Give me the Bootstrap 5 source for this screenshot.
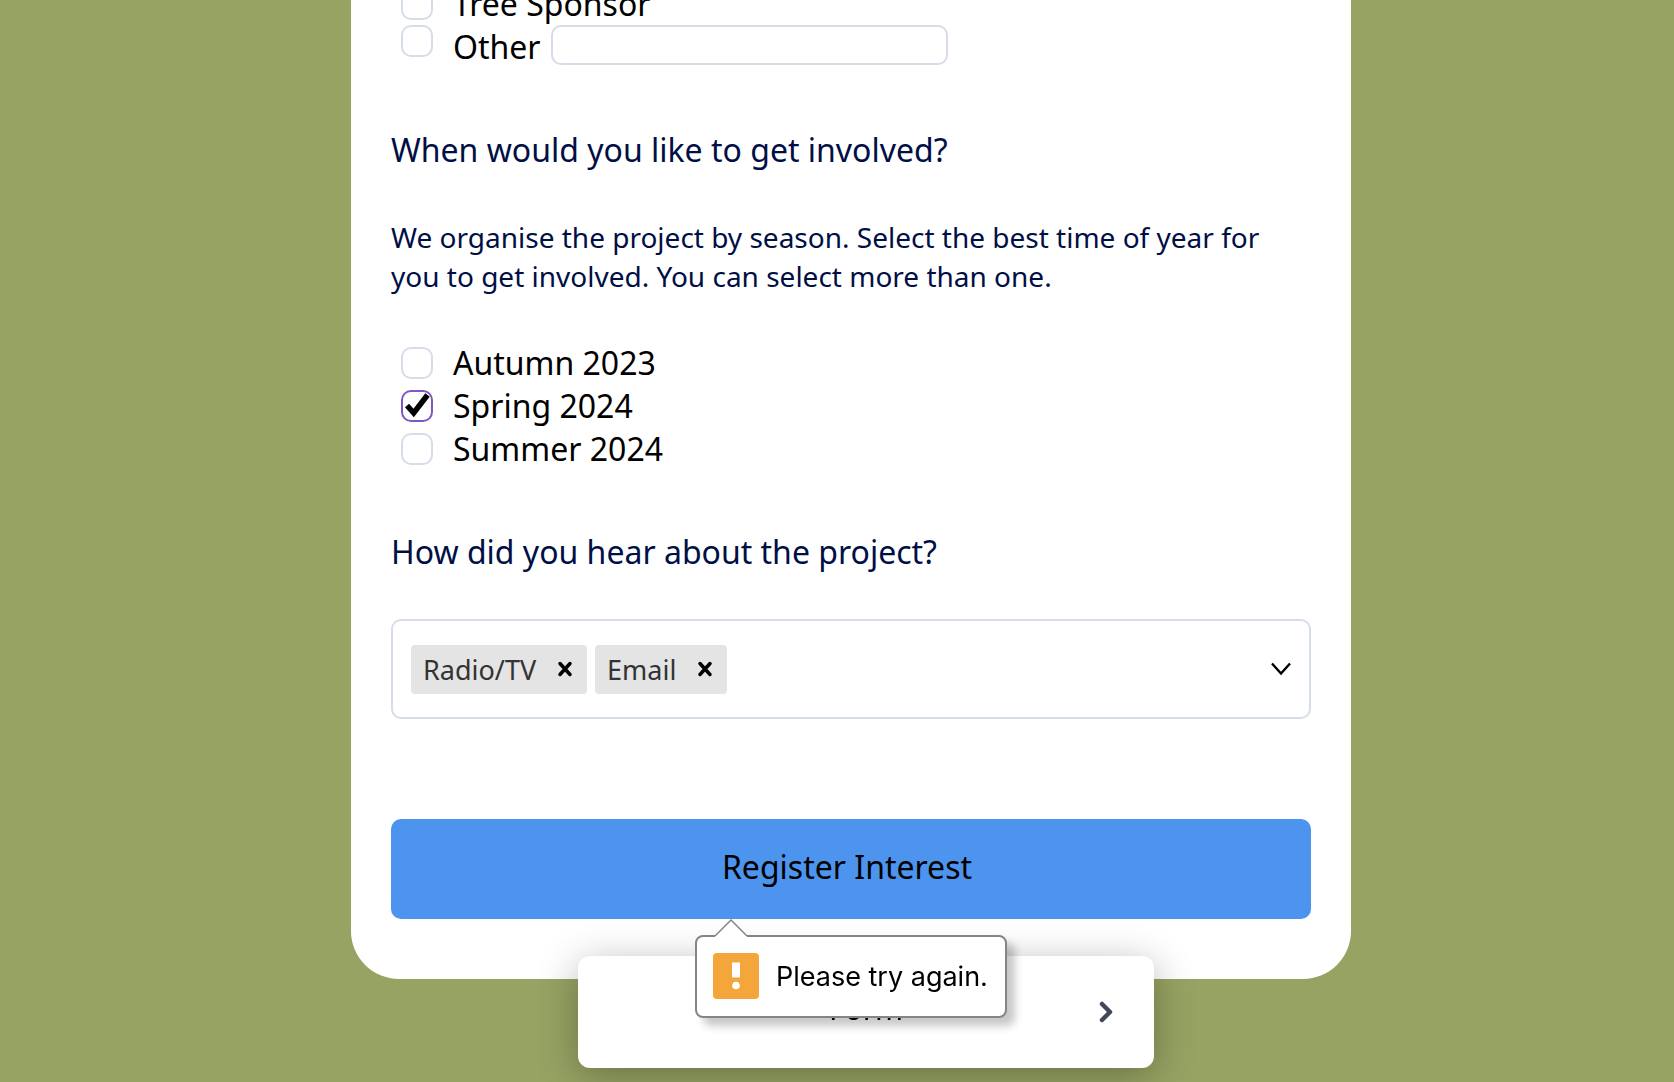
<!DOCTYPE html>
<html lang="en">
<head>
<meta charset="utf-8">
<meta name="viewport" content="width=device-width, initial-scale=1">
<title>Register Interest</title>
<link href="https://cdn.jsdelivr.net/npm/bootstrap@5.3.0/dist/css/bootstrap.min.css" rel="stylesheet">
<style>
  body { background: #97a363; color: #000; font-family: "Noto Sans", sans-serif; font-size: 32px; line-height: 43px; overflow: hidden; }
  .page-wrap { display: flow-root; min-height: 100vh; padding-left: 28px; }
  /* the page is scrolled: the sheet continues above the window */
  .sheet { max-width: 1000px; margin: -18px auto 0; padding: 0 40px 60px; background: #fff; border-radius: 0 0 48px 48px; }
  .question { color: #000f45; font-size: 32px; line-height: 43px; margin: 60px 0 46px; font-weight: 400; }
  .hint { color: #000f45; font-size: 28px; line-height: 39px; margin: 47px 0 45px; }
  .choice { padding-left: 10px; gap: 20px; }
  .choice .form-check-input { width: 32px; height: 32px; margin: 0; flex: none; border: 2px solid #d6dce8; border-radius: 10px; background-color: #fff; }
  .choice .form-check-input:checked { border-color: #7e57c2; background-color: #fff; background-size: 28px 28px; background-image: url("data:image/svg+xml,%3csvg xmlns='http://www.w3.org/2000/svg' viewBox='0 0 28 28'%3e%3cpath fill='none' stroke='%23000' stroke-width='5.5' d='M4 13.500l6.700 7.500L24.500 3'/%3e%3c/svg%3e"); }
  .other-box { width: 397px; height: 40px; margin-left: -10px; border: 2px solid #d6dce8; border-radius: 10px; }
  .picker { height: 100px; padding: 0 18px; border: 2px solid #d6dce8; border-radius: 10px; margin-bottom: 100px; }
  .tag { height: 49px; padding: 0 14px 0 12px; gap: 21px; background: #e4e4e4; color: #333; border-radius: 4px; font-size: 27px; }
  .plain-btn { padding: 0; border: 0; background: none; display: flex; color: #000; }
  .register { height: 100px; border: 0; border-radius: 10px; padding: 0 8px 6px 0; font-size: 32px; line-height: 43px; --bs-btn-bg: #4d94ef; --bs-btn-color: #000; --bs-btn-hover-bg: #3f86e2; --bs-btn-hover-color: #000; }
  .step-bar { position: fixed; bottom: 14px; left: 50%; margin-left: -259px; width: 576px; height: 112px; padding: 0 40px; background: #fff; border-radius: 12px; box-shadow: 0 8px 40px rgba(0,0,0,.3); }
  .step-name { padding-bottom: 8px; font-size: 30px; }
  .tip { position: absolute; top: 100%; left: 304px; margin-top: 16px; z-index: 1050; width: 312px; height: 83px; padding: 0 16px 1px; gap: 17px; background: #fff; border: 2px solid #858585; border-radius: 8px; box-shadow: 8px 8px 8px rgba(0,0,0,.22); font-family: Inter, sans-serif; font-size: 27px; white-space: nowrap; }
  .tip-arrow { position: absolute; left: 18px; top: -18px; }
  svg { display: block; flex: none; }
</style>
</head>
<body>
<main class="page-wrap">
  <form class="sheet" onsubmit="return false">
    <div class="choice d-flex align-items-center">
      <input class="form-check-input" type="checkbox" id="tree"><label for="tree">Tree Sponsor</label>
    </div>
    <div class="choice d-flex align-items-start">
      <input class="form-check-input" type="checkbox" id="other"><label for="other">Other</label>
      <input class="other-box" type="text" aria-label="Other role">
    </div>

    <h2 class="question">When would you like to get involved?</h2>
    <p class="hint">We organise the project by season. Select the best time of year for you to get involved. You can select more than one.</p>
    <div class="choice d-flex align-items-center">
      <input class="form-check-input" type="checkbox" id="autumn"><label for="autumn">Autumn 2023</label>
    </div>
    <div class="choice d-flex align-items-center">
      <input class="form-check-input" type="checkbox" id="spring" checked><label for="spring">Spring 2024</label>
    </div>
    <div class="choice d-flex align-items-center">
      <input class="form-check-input" type="checkbox" id="summer"><label for="summer">Summer 2024</label>
    </div>

    <h2 class="question">How did you hear about the project?</h2>
    <div class="picker d-flex align-items-center gap-2">
      <span class="tag d-flex align-items-center">Radio/TV
        <button type="button" class="plain-btn" aria-label="Remove Radio/TV"><svg width="16" height="16" viewBox="0 0 16 16" fill="none" stroke="#000" stroke-width="3.500" stroke-linecap="round"><path d="M3 2.500l10 11M13 2.500L3 13.500"/></svg></button></span>
      <span class="tag d-flex align-items-center">Email
        <button type="button" class="plain-btn" aria-label="Remove Email"><svg width="16" height="16" viewBox="0 0 16 16" fill="none" stroke="#000" stroke-width="3.500" stroke-linecap="round"><path d="M3 2.500l10 11M13 2.500L3 13.500"/></svg></button></span>
      <button type="button" class="plain-btn ms-auto" aria-label="Show options"><svg width="20" height="14" viewBox="0 0 20 14" fill="none" stroke="#000" stroke-width="2.400"><path d="M1 1.500l9 10 9-10"/></svg></button>
    </div>

    <div class="position-relative">
      <button type="submit" class="btn register w-100">Register Interest</button>
      <div class="tip d-flex align-items-center" role="alert">
        <svg class="tip-arrow" width="32" height="19" viewBox="0 0 32 19"><path d="M0 16.500L16 1l16 15.500V19H0z" fill="#fff"/><path d="M0 17L16 1l16 16" fill="none" stroke="#858585" stroke-width="1.500"/></svg>
        <svg width="46" height="46" viewBox="0 0 46 46"><rect width="46" height="46" rx="4" fill="#f4a63a"/><path d="M19 9.500h8v15h-8z" fill="#fff"/><circle cx="23" cy="32.500" r="3.800" fill="#fff"/></svg>
        <span>Please try again.</span>
      </div>
    </div>
  </form>
</main>

<nav class="step-bar d-flex align-items-center justify-content-end" aria-label="Steps">
  <span class="step-name position-absolute start-50 translate-middle-x">Form</span>
  <button type="button" class="plain-btn" aria-label="Next"><svg width="16" height="22" viewBox="0 0 16 22" fill="none" stroke="#424659" stroke-width="4.500" stroke-linecap="round" stroke-linejoin="round"><path d="M4 3l8 8-8 8"/></svg></button>
</nav>
<script src="https://cdn.jsdelivr.net/npm/bootstrap@5.3.0/dist/js/bootstrap.bundle.min.js"></script>
</body>
</html>
